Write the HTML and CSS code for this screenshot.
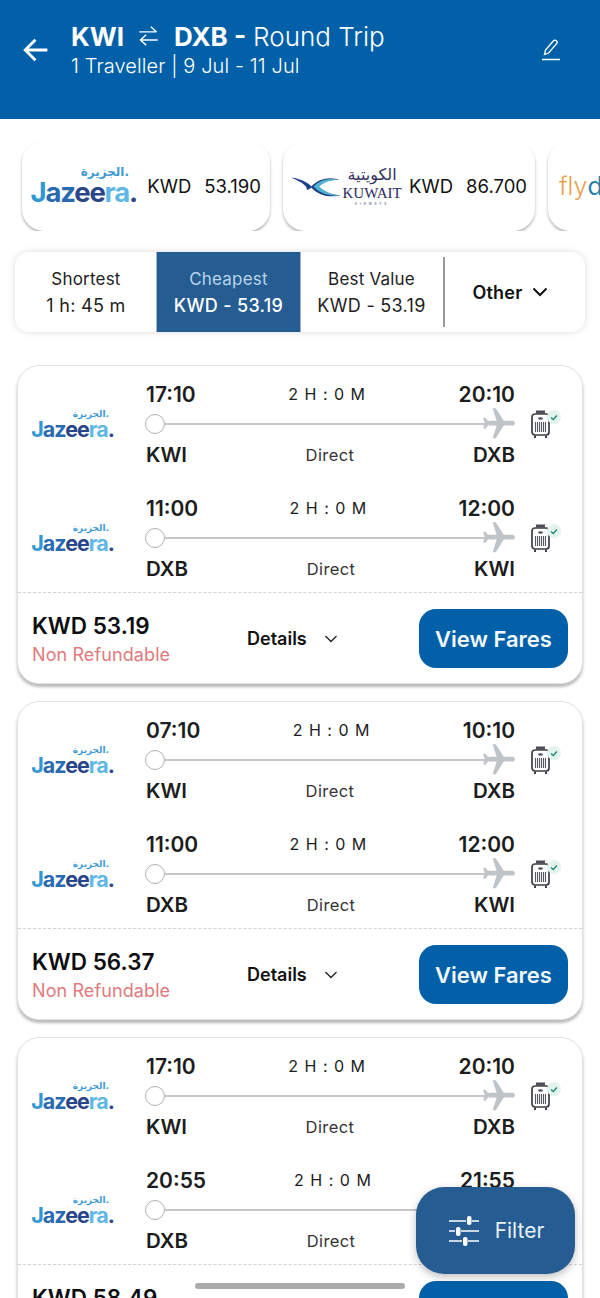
FILE: index.html
```html
<!DOCTYPE html>
<html>
  <head>
    <meta charset="UTF-8">
    <title>Flight Results</title>
    <link rel="stylesheet" href="styles.css">
  </head>
  <body>
    <!-- shared icons -->
    <svg class="sprite">
      <symbol id="plane" viewBox="0 0 24 24">
        <path d="M21 16v-2l-8-5V3.500c0-.83-.67-1.500-1.500-1.500S10 2.670 10 3.500V9l-8 5v2l8-2.500V19l-2 1.500V22l3.500-1 3.500 1v-1.500L13 19v-5.500z" transform="rotate(90 12 12)"/>
      </symbol>
      <symbol id="bag" viewBox="0 0 31 30">
        <path d="M6 4.500V1.500h9v3z" fill="#4a4d52"/>
        <rect x="2" y="5" width="17" height="21" rx="3" fill="#fff" stroke="#3c3f44" stroke-width="1.700"/>
        <path d="M5 26.500v2.500M16 26.500v2.500" stroke="#3c3f44" stroke-width="2"/>
        <ellipse cx="10.500" cy="9.500" rx="2.500" ry="1.200" fill="#55585c"/>
        <path d="M5.500 13v10M7.500 13v10M9.500 13v10M11.500 13v10M13.500 13v10M15.500 13v10" stroke="#55585c" stroke-width="1.100"/>
        <circle cx="24" cy="8" r="7" fill="#e3f4ef"/>
        <path d="M21 8.500l2.200 2 3.800-4" fill="none" stroke="#1d8a78" stroke-width="1.300"/>
      </symbol>
    </svg>

    <header class="top-bar">
      <svg class="back-icon" viewBox="0 0 24 24"><path d="M22.500 12H2.500M11.500 2.500L2 12l9.500 9.500"/></svg>
      <div class="trip-info">
        <div class="trip-title">
          <b>KWI</b>
          <svg class="swap-icon" viewBox="0 0 20 20"><path d="M2 6h15M12 1.500L17 6M18 13H3M8 8.500L3 13l5 4.500"/></svg>
          <b>DXB -</b>
          <span>Round Trip</span>
        </div>
        <div class="trip-sub">1 Traveller | 9 Jul - 11 Jul</div>
      </div>
      <svg class="edit-icon" viewBox="0 0 20 24"><path d="M3.500 16.500l1-4.500L12.500 2.800c.8-.9 2-.9 2.900-.1s1 2 .2 2.900L7.600 15zM1 21.500h18"/></svg>
    </header>

    <section class="airlines">
      <div class="airline-card">
        <div class="logo logo-big">
          <span class="logo-ar">الجزيرة.</span>
          <span class="logo-en"><i class="c1">J</i><i class="c2">az</i><i class="c3">ee</i><i class="c4">ra</i><i class="c3">.</i></span>
        </div>
        <div class="airline-price"><span>KWD</span><span>53.190</span></div>
      </div>
      <div class="airline-card kuwait-card">
        <svg class="kuwait-bird" viewBox="0 0 44 24">
          <path d="M0 4c8 1 14 4 18 8C24 5 34 3 43 6 33 6 26 9 24 12c5 5 12 7 20 8-10 2-20 0-26-7-2 1-3 2-4 2 0-5-8-8-14-11z" fill="#1f3f86"/>
          <path d="M20 12C25 6 34 4 42 6 34 6 28 9 25 12c5 5 11 7 18 8-9 1-18-2-23-8z" fill="#4fb3d3"/>
        </svg>
        <div class="kuwait-name">
          <span class="kuwait-ar">الكويتية</span>
          <span class="kuwait-en">KUWAIT</span>
          <span class="kuwait-small">AIRWAYS</span>
        </div>
        <div class="airline-price"><span>KWD</span><span>86.700</span></div>
      </div>
      <div class="airline-card flydubai-card">
        <span class="fly-logo"><i>fly</i><b>dubai</b></span>
      </div>
    </section>

    <section class="tabs">
      <div class="tab">
        <span>Shortest</span>
        <span class="tab-value">1 h: 45 m</span>
      </div>
      <div class="tab tab-active">
        <span>Cheapest</span>
        <span class="tab-value tab-strong">KWD - 53.19</span>
      </div>
      <div class="tab">
        <span>Best Value</span>
        <span class="tab-value">KWD - 53.19</span>
      </div>
      <div class="tab tab-other">
        <b>Other</b>
        <svg class="other-chevron" viewBox="0 0 16 10"><path d="M1.500 1.500L8 8l6.500-6.500"/></svg>
      </div>
    </section>

    <main class="results">
      <article class="flight-card">
        <div class="segment">
          <div class="logo"><span class="logo-ar">الجزيرة.</span><span class="logo-en"><i class="c1">J</i><i class="c2">az</i><i class="c3">ee</i><i class="c4">ra</i><i class="c3">.</i></span></div>
          <div class="route">
            <div class="route-row"><b class="time">17:10</b><span class="duration">2 H : 0 M</span><b class="time">20:10</b></div>
            <div class="track"><svg class="plane"><use href="#plane"/></svg></div>
            <div class="route-row"><b class="code">KWI</b><span class="stops">Direct</span><b class="code">DXB</b></div>
          </div>
          <svg class="bag"><use href="#bag"/></svg>
        </div>
        <div class="segment">
          <div class="logo"><span class="logo-ar">الجزيرة.</span><span class="logo-en"><i class="c1">J</i><i class="c2">az</i><i class="c3">ee</i><i class="c4">ra</i><i class="c3">.</i></span></div>
          <div class="route">
            <div class="route-row"><b class="time">11:00</b><span class="duration">2 H : 0 M</span><b class="time">12:00</b></div>
            <div class="track"><svg class="plane"><use href="#plane"/></svg></div>
            <div class="route-row"><b class="code">DXB</b><span class="stops">Direct</span><b class="code">KWI</b></div>
          </div>
          <svg class="bag"><use href="#bag"/></svg>
        </div>
        <div class="card-footer">
          <div class="fare"><b>KWD 53.19</b><span>Non Refundable</span></div>
          <div class="details"><b>Details</b><svg viewBox="0 0 14 8"><path d="M1.500 1L7 6.500 12.500 1"/></svg></div>
          <button class="view-fares">View Fares</button>
        </div>
      </article>

      <article class="flight-card">
        <div class="segment">
          <div class="logo"><span class="logo-ar">الجزيرة.</span><span class="logo-en"><i class="c1">J</i><i class="c2">az</i><i class="c3">ee</i><i class="c4">ra</i><i class="c3">.</i></span></div>
          <div class="route">
            <div class="route-row"><b class="time">07:10</b><span class="duration">2 H : 0 M</span><b class="time">10:10</b></div>
            <div class="track"><svg class="plane"><use href="#plane"/></svg></div>
            <div class="route-row"><b class="code">KWI</b><span class="stops">Direct</span><b class="code">DXB</b></div>
          </div>
          <svg class="bag"><use href="#bag"/></svg>
        </div>
        <div class="segment">
          <div class="logo"><span class="logo-ar">الجزيرة.</span><span class="logo-en"><i class="c1">J</i><i class="c2">az</i><i class="c3">ee</i><i class="c4">ra</i><i class="c3">.</i></span></div>
          <div class="route">
            <div class="route-row"><b class="time">11:00</b><span class="duration">2 H : 0 M</span><b class="time">12:00</b></div>
            <div class="track"><svg class="plane"><use href="#plane"/></svg></div>
            <div class="route-row"><b class="code">DXB</b><span class="stops">Direct</span><b class="code">KWI</b></div>
          </div>
          <svg class="bag"><use href="#bag"/></svg>
        </div>
        <div class="card-footer">
          <div class="fare"><b>KWD 56.37</b><span>Non Refundable</span></div>
          <div class="details"><b>Details</b><svg viewBox="0 0 14 8"><path d="M1.500 1L7 6.500 12.500 1"/></svg></div>
          <button class="view-fares">View Fares</button>
        </div>
      </article>

      <article class="flight-card">
        <div class="segment">
          <div class="logo"><span class="logo-ar">الجزيرة.</span><span class="logo-en"><i class="c1">J</i><i class="c2">az</i><i class="c3">ee</i><i class="c4">ra</i><i class="c3">.</i></span></div>
          <div class="route">
            <div class="route-row"><b class="time">17:10</b><span class="duration">2 H : 0 M</span><b class="time">20:10</b></div>
            <div class="track"><svg class="plane"><use href="#plane"/></svg></div>
            <div class="route-row"><b class="code">KWI</b><span class="stops">Direct</span><b class="code">DXB</b></div>
          </div>
          <svg class="bag"><use href="#bag"/></svg>
        </div>
        <div class="segment">
          <div class="logo"><span class="logo-ar">الجزيرة.</span><span class="logo-en"><i class="c1">J</i><i class="c2">az</i><i class="c3">ee</i><i class="c4">ra</i><i class="c3">.</i></span></div>
          <div class="route">
            <div class="route-row"><b class="time">20:55</b><span class="duration">2 H : 0 M</span><b class="time">21:55</b></div>
            <div class="track"><svg class="plane"><use href="#plane"/></svg></div>
            <div class="route-row"><b class="code">DXB</b><span class="stops">Direct</span><b class="code">KWI</b></div>
          </div>
          <svg class="bag"><use href="#bag"/></svg>
        </div>
        <div class="card-footer">
          <div class="fare"><b>KWD 58.49</b><span>Non Refundable</span></div>
          <div class="details"><b>Details</b><svg viewBox="0 0 14 8"><path d="M1.500 1L7 6.500 12.500 1"/></svg></div>
          <button class="view-fares">View Fares</button>
        </div>
      </article>
    </main>

    <!-- floats over the list -->
    <button class="filter-btn">
      <svg viewBox="0 0 30 30"><path d="M0 5h17M23 5h7M0 15h6M12 15h18M0 25h13M19 25h11"/><rect x="18" y="0" width="4.500" height="9" rx="2"/><rect x="7" y="11" width="4.500" height="9" rx="2"/><rect x="14" y="21" width="4.500" height="9" rx="2"/></svg>
      <span>Filter</span>
    </button>
    <div class="home-bar"></div>
  </body>
</html>
```

FILE: styles.css
```css
* {
  box-sizing: border-box;
}

html,
body {
  height: 1298px;
}

body {
  margin: 0;
  position: relative;
  overflow: hidden;
  background-color: #fff;
  color: #1b1c1e;
  font-family: Inter, "Noto Sans", sans-serif;
}

i {
  font-style: normal;
}

svg {
  display: block;
}

.sprite {
  display: none;
}

/* top bar */
.top-bar {
  height: 119px;
  background-color: #0160a8;
  color: #fff;
  display: flex;
  align-items: flex-start;
  padding: 20px 39px 0 23px;
}

.back-icon {
  width: 26px;
  height: 26px;
  margin-top: 17px;
  fill: none;
  stroke: #fff;
  stroke-width: 2.6;
}

.trip-info {
  margin-left: 22px;
  flex: 1;
}

.trip-title {
  display: flex;
  align-items: center;
  font-size: 26px;
  line-height: 33px;
}

.trip-title b {
  font-weight: 700;
}

.trip-title span {
  margin-left: 7px;
  font-weight: 300;
}

.swap-icon {
  width: 23px;
  height: 23px;
  margin: 0 14px 0 13px;
  fill: none;
  stroke: #fff;
  stroke-width: 1.2;
}

.trip-sub {
  font-size: 20px;
  line-height: 27px;
  font-weight: 300;
  letter-spacing: 0.1px;
}

.edit-icon {
  width: 20px;
  height: 24px;
  margin-top: 18px;
  fill: none;
  stroke: #fff;
  stroke-width: 1.3;
}

/* airline strip */
.airlines {
  display: flex;
  gap: 13px;
  padding: 22px 0 0 22px;
  overflow: hidden;
}

.airline-card {
  flex: none;
  width: 248px;
  height: 90px;
  padding: 0 9px 0 11px;
  display: flex;
  align-items: center;
  justify-content: space-between;
  background-color: #fff;
  border-radius: 22px;
  box-shadow: 0 2px 3px rgba(0, 0, 0, 0.3);
}

.kuwait-card {
  width: 252px;
  padding: 0 8px 0 8px;
}

.flydubai-card {
  width: 120px;
}

.airline-price {
  display: flex;
  gap: 13px;
  font-size: 18.5px;
  white-space: nowrap;
  color: #111;
}

.kuwait-bird {
  width: 50px;
  height: 27px;
}

.kuwait-name {
  display: flex;
  flex-direction: column;
  align-items: center;
  color: #2d2a5e;
  line-height: 1;
  margin-left: -6px;
}

.kuwait-ar {
  font-family: "DejaVu Sans", sans-serif;
  font-size: 16px;
  line-height: 18px;
  color: #33315f;
}

.kuwait-en {
  font-family: "Liberation Serif", serif;
  font-size: 15px;
  margin-top: 2px;
}

.kuwait-small {
  font-size: 3px;
  letter-spacing: 3px;
  margin-top: 2px;
}

.fly-logo {
  font-size: 25px;
  font-weight: 300;
  color: #eaa04c;
  white-space: nowrap;
}

.fly-logo b {
  font-weight: 400;
  color: #2a7fa8;
}

/* Jazeera logo, text only */
.logo {
  display: flex;
  flex-direction: column;
  align-items: flex-end;
  width: 81px;
  line-height: 1;
}

.logo-ar {
  font-family: "DejaVu Sans", sans-serif;
  font-weight: 700;
  font-size: 9px;
  line-height: 10px;
  color: #3d9ad4;
  margin-right: 5px;
}

.logo-en {
  font-family: Inter, sans-serif;
  font-weight: 700;
  font-size: 21.5px;
  line-height: 21px;
  letter-spacing: -1px;
  white-space: nowrap;
}

.logo-big {
  width: 104px;
}

.logo-big .logo-ar {
  font-size: 12px;
  line-height: 13px;
  margin-right: 8px;
}

.logo-big .logo-en {
  font-size: 27.5px;
  line-height: 27px;
  letter-spacing: -1.2px;
}

.c1 {
  color: #2f97d3;
}

.c2 {
  color: #2a6ab0;
}

.c3 {
  color: #2b4589;
}

.c4 {
  color: #5fb8e4;
}

/* sort tabs */
.tabs {
  margin: 21px 15px 0;
  height: 80px;
  display: grid;
  grid-template-columns: 142px 143px 143px 142px;
  background-color: #fff;
  border-radius: 14px;
  box-shadow: 0 0 7px rgba(0, 0, 0, 0.14);
  overflow: hidden;
}

.tab {
  display: flex;
  flex-direction: column;
  align-items: center;
  justify-content: center;
  gap: 3px;
  font-size: 17px;
  line-height: 23px;
  color: #222;
  letter-spacing: 0.2px;
}

.tab-value {
  font-size: 18px;
  letter-spacing: 0.3px;
}

.tab-active {
  background-color: #255c92;
  color: #b9d4ea;
  box-shadow: -1px 0 0 #9fb1c3, 1px 0 0 #9fb1c3;
}

.tab-strong {
  color: #fff;
  font-weight: 500;
}

.tab-other {
  flex-direction: row;
  gap: 9px;
  position: relative;
  padding-right: 8px;
  color: #111;
  font-size: 18px;
}

.tab-other b {
  font-weight: 600;
}

.tab-other::before {
  content: "";
  position: absolute;
  left: 0;
  top: 5px;
  bottom: 5px;
  width: 1.5px;
  background-color: #9a9a9a;
}

.other-chevron {
  width: 16px;
  height: 10px;
  fill: none;
  stroke: #111;
  stroke-width: 2;
}

/* flight cards */
.results {
  margin: 33px 17px 0;
  display: flex;
  flex-direction: column;
  gap: 17px;
}

.flight-card {
  flex: none;
  background-color: #fff;
  border: 1px solid #e2e2e2;
  border-radius: 22px;
  padding-top: 13px;
  box-shadow: 0 3px 3px rgba(0, 0, 0, 0.28);
}

.segment {
  display: flex;
  align-items: center;
  height: 90px;
  margin-bottom: 24px;
  padding-left: 15px;
}

.segment + .segment {
  margin-bottom: 9px;
}

.route {
  width: 369px;
  margin-left: 32px;
  flex: none;
}

.route-row {
  display: flex;
  justify-content: space-between;
  align-items: center;
  height: 30px;
}

.time,
.code {
  font-size: 21px;
  font-weight: 600;
  color: #1c1d20;
}

.code {
  font-size: 20.5px;
}

.duration {
  font-size: 16px;
  letter-spacing: 1px;
}

.stops {
  font-size: 16.5px;
  color: #333;
  letter-spacing: 0.4px;
  padding-top: 1px;
}

.track {
  height: 30px;
  position: relative;
  display: flex;
  align-items: center;
}

.track::before {
  content: "";
  width: 18px;
  height: 18px;
  flex: none;
  margin-left: -1px;
  background-color: #fff;
  border: 1.5px solid #aeb2b6;
  border-radius: 50%;
}

.track::after {
  content: "";
  flex: 1;
  height: 2px;
  margin-right: 20px;
  background-color: #c4c7ca;
}

.plane {
  position: absolute;
  right: -3px;
  top: -4px;
  width: 38px;
  height: 38px;
  fill: #bfc4c9;
}

.bag {
  flex: none;
  width: 31px;
  height: 30px;
  margin-left: 15px;
}

.card-footer {
  border-top: 1px dashed #d4d4d4;
  height: 91px;
  padding: 1px 14px 0 14px;
  display: flex;
  align-items: center;
}

.fare {
  width: 215px;
  display: flex;
  flex-direction: column;
}

.fare b {
  font-size: 22.5px;
  line-height: 28px;
  font-weight: 600;
  color: #0e0e10;
}

.fare span {
  font-size: 18px;
  line-height: 30px;
  margin-bottom: -4px;
  letter-spacing: 0.1px;
  color: #df7a7e;
}

.details {
  display: flex;
  align-items: center;
  gap: 17px;
  width: 172px;
}

.details b {
  font-size: 18px;
  font-weight: 600;
  color: #111;
}

.details svg {
  width: 14px;
  height: 8px;
  fill: none;
  stroke: #222;
  stroke-width: 1.3;
}

.view-fares {
  width: 149px;
  height: 59px;
  border: none;
  border-radius: 17px;
  background-color: #0160a8;
  color: #f2f8fc;
  font-family: inherit;
  font-size: 22px;
  font-weight: 600;
}

/* floating filter + gesture bar */
.filter-btn {
  position: absolute;
  left: 416px;
  top: 1187px;
  width: 159px;
  height: 87px;
  border: none;
  border-radius: 28px;
  background-color: #255c92;
  color: #e8f0f7;
  font-family: inherit;
  font-size: 21px;
  display: flex;
  align-items: center;
  justify-content: center;
  gap: 16px;
  padding-right: 4px;
  box-shadow: 0 3px 8px rgba(0, 0, 0, 0.25);
}

.filter-btn svg {
  width: 30px;
  height: 30px;
  fill: #fff;
  stroke: #fff;
  stroke-width: 1.6;
}

.filter-btn rect {
  stroke: none;
}

.home-bar {
  position: absolute;
  left: 195px;
  top: 1283px;
  width: 210px;
  height: 6px;
  border-radius: 3px;
  background-color: #aaa;
}
```
